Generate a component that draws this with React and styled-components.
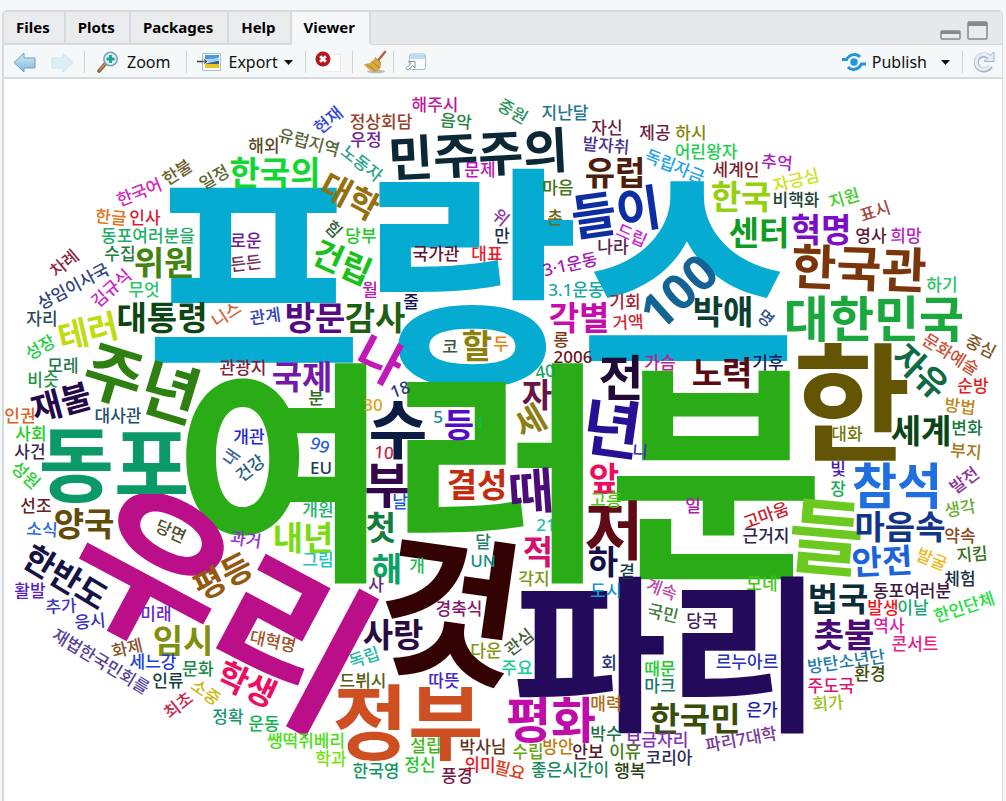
import React from "react";
import styled, { createGlobalStyle } from "styled-components";

const GlobalStyle = createGlobalStyle`
  * { box-sizing: border-box; }
  body {
    margin: 0;
    background: #f5f7f8;
    color: #000;
    font-family: "Noto Sans", "Noto Sans CJK KR", sans-serif;
  }
`;

const Page = styled.main`
  min-height: 100vh;
  padding: 10px 3px 0 2px;
  display: flex;
  overflow: hidden;
`;

const Pane = styled.section`
  flex: 1;
  min-width: 0;
  display: flex;
  flex-direction: column;
  border: 2px solid #d6dadc;
  border-right-width: 1px;
  border-bottom: 0;
  border-radius: 5px 5px 0 0;
  background: #fff;
`;

const TabBar = styled.header`
  display: flex;
  height: 33px;
  background: #e6e8ea;
`;

const TabList = styled.div`
  display: flex;
`;

const Tab = styled.button`
  border: 0;
  border-right: 2px solid #d6dadc;
  border-bottom: 2px solid ${(p) => (p["aria-selected"] ? "#f4f8f9" : "#d6dadc")};
  padding: 0 14px 0 12px;
  background: ${(p) => (p["aria-selected"] ? "#f4f8f9" : "#e9ebec")};
  font: 700 15px/31px "Noto Sans", sans-serif;
  color: #000;
`;

const TabFill = styled.div`
  flex: 1;
  display: flex;
  align-items: flex-end;
  justify-content: flex-end;
  gap: 6px;
  padding: 0 14px 4px 0;
  border-bottom: 1px solid #d6dadc;
`;

const Toolbar = styled.div`
  display: flex;
  align-items: center;
  height: 34px;
  padding: 2px 7px 0 9px;
  background: #f4f8f9;
  border-bottom: 2px solid #d6dadc;
`;

const ToolButton = styled.button`
  display: flex;
  align-items: center;
  gap: ${(p) => p.$gap || 4}px;
  border: 0;
  padding: 0;
  margin-right: ${(p) => p.$after || 0}px;
  background: none;
  color: #111;
  font: 400 16px/24px "Noto Sans", sans-serif;

  svg { display: block; flex: none; }
`;

const Divider = styled.span`
  width: 1px;
  height: 22px;
  margin-right: ${(p) => p.$after}px;
  background: #cfd4d6;
`;

const Spacer = styled.span`
  flex: 1;
`;

const Cloud = styled.div`
  position: relative;
  flex: none;
  height: 722px;
  overflow: hidden;
  background: #fff;
`;

const Word = styled.span`
  position: absolute;
  font-family: "Noto Sans", "Noto Sans CJK KR", sans-serif;
  font-weight: ${(p) => (p.$light ? 500 : 700)};
  line-height: 1;
  white-space: nowrap;
`;

// Coordinates of the middle of the cloud's top edge in the layout's own units.
const ORIGIN = { x: 503, y: 79 };

const XS = 17;
const S = 33;
const M = 49;
const L = 64;
const XL = 82;
const XXL = 168;
const HUGE = 236;

// text, centre x, centre y, size, rotation in degrees, colour
const words = [
  ["프랑스", 471, 276, HUGE, 0, "#06abd2"],
  ["여러분", 499, 471, HUGE, 0, "#2aac16"],
  ["파리", 667, 653, XXL, 0, "#230a5a"],
  ["우리", 223, 602, XXL, 28, "#bb0f8a"],
  ["것", 450, 607, 158, 8, "#330203"],
  ["한", 852, 402, 128, 0, "#635504"],
  ["동포", 114, 463, XL, 0, "#0b9a67"],
  ["정부", 408, 721, XL, 0, "#ce5022"],
  ["들", 826, 536, XL, 5, "#6bc91f"],
  ["주년", 142, 383, L, 17, "#2e8010"],
  ["수", 398, 429, L, 0, "#0c1b41"],
  ["년", 612, 428, L, 8, "#281094"],
  ["저", 614, 530, L, 0, "#5f0a15"],

  ["민주주의", 478, 154, M, -3, "#0c2836"],
  ["들이", 616, 212, M, -8, "#0c2da3"],
  ["한국관", 859, 268, M, 2, "#7b350b"],
  ["대한민국", 874, 318, M, 0, "#18a83c"],
  ["참석", 897, 485, M, 0, "#1f6fe0"],
  ["평화", 551, 719, M, 0, "#c00daa"],
  ["100", 678, 291, M, -42, "#156394"],
  ["나", 380, 359, M, 28, "#c218ba"],
  ["전", 621, 377, M, 0, "#210b36"],
  ["부", 387, 484, M, 0, "#33094a"],
  ["때", 531, 491, M, -4, "#4b0b78"],

  ["한국의", 275, 172, S, 0, "#12d631"],
  ["대학", 350, 196, S, 28, "#94700f"],
  ["건립", 342, 262, S, 24, "#18c21b"],
  ["위원", 164, 262, S, 0, "#418410"],
  ["대통령", 162, 317, S, 0, "#0c4713"],
  ["방문", 315, 317, S, 0, "#550a83"],
  ["감사", 375, 317, S, 0, "#1d6012"],
  ["테러", 88, 331, S, -13, "#c1dc0e"],
  ["국제", 302, 376, S, 0, "#7419a6"],
  ["재불", 61, 402, S, -15, "#240a49"],
  ["양국", 84, 523, S, 0, "#624b08"],
  ["한반도", 66, 577, S, 31, "#161246"],
  ["평등", 223, 576, S, -27, "#93590f"],
  ["임시", 183, 640, S, 0, "#7e900e"],
  ["학생", 247, 684, S, 25, "#ed0d62"],
  ["내년", 303, 537, S, 0, "#79db11"],
  ["첫", 381, 527, S, 0, "#117d3e"],
  ["해", 387, 568, S, 0, "#0aa262"],
  ["사랑", 393, 634, S, 0, "#280b40"],
  ["할", 477, 345, S, 0, "#8f7f0d"],
  ["등", 459, 424, S, 0, "#5709ca"],
  ["자", 537, 394, S, 0, "#681447"],
  ["세", 530, 421, S, -30, "#8e7e12"],
  ["결성", 477, 484, S, 0, "#c52b0d"],
  ["적", 538, 551, S, 0, "#d90f6d"],
  ["앞", 604, 478, S, 0, "#ed0d5c"],
  ["하", 603, 561, S, 0, "#150f49"],
  ["유럽", 615, 172, S, 0, "#4d1e0c"],
  ["한국", 741, 196, S, 0, "#94d00d"],
  ["센터", 759, 232, S, 0, "#0d9d1f"],
  ["혁명", 821, 229, S, 0, "#7c0dc7"],
  ["각별", 579, 317, S, 0, "#c80dad"],
  ["박애", 723, 311, S, 0, "#0c3f34"],
  ["노력", 722, 372, S, 0, "#570b15"],
  ["자유", 921, 371, S, 43, "#0e6b44"],
  ["세계", 921, 430, S, 0, "#0a4517"],
  ["마음속", 900, 526, S, 0, "#113687"],
  ["안전", 882, 561, S, -3, "#1b63da"],
  ["법국", 838, 598, S, 0, "#0b2e36"],
  ["촛불", 844, 634, S, 0, "#4a0a75"],
  ["한국민", 695, 718, S, 0, "#384d08"],

  ["해주시", 435, 104, XS, 0, "#c0189f"],
  ["음악", 456, 121, XS, 5, "#248745"],
  ["정상회담", 381, 121, XS, 0, "#994128"],
  ["우정", 366, 139, XS, 0, "#6b2395"],
  ["현재", 328, 120, XS, -40, "#3444d8"],
  ["해외", 264, 145, XS, 0, "#584a26"],
  ["유럽지역", 309, 142, XS, 15, "#57673b"],
  ["노동자", 362, 163, XS, 38, "#28a486"],
  ["한불", 177, 172, XS, -33, "#68602d"],
  ["일정", 214, 177, XS, -30, "#576630"],
  ["한국어", 139, 192, XS, -22, "#d328ba"],
  ["한글", 111, 217, XS, 5, "#dc7616"],
  ["인사", 145, 217, XS, 0, "#d41e3a"],
  ["동포여러분을", 148, 235, XS, 0, "#1fae69"],
  ["수집", 120, 253, XS, 0, "#247c44"],
  ["차례", 64, 263, XS, -40, "#8b2742"],
  ["상임이사국", 73, 286, XS, -28, "#324582"],
  ["김규식", 111, 288, XS, -42, "#d023c2"],
  ["무엇", 144, 289, XS, 0, "#1fca67"],
  ["자리", 42, 318, XS, 0, "#2b4b5a"],
  ["로운", 246, 240, XS, 0, "#6f1c99"],
  ["든든", 246, 263, XS, -7, "#76315d"],
  ["힘", 334, 229, XS, 45, "#356340"],
  ["당부", 361, 235, XS, 0, "#25ca28"],
  ["월", 370, 289, XS, 0, "#b818b0"],
  ["줄", 411, 301, XS, 0, "#101352"],
  ["관계", 265, 316, XS, -8, "#3143b4"],
  ["니스", 226, 314, XS, -33, "#d0663a"],
  ["문제", 480, 169, XS, 0, "#be18ba"],
  ["국가관", 436, 253, XS, 0, "#5c1834"],
  ["대표", 487, 253, XS, 0, "#f0182b"],
  ["위", 501, 217, XS, 40, "#903aa1"],
  ["만", 502, 235, XS, 0, "#232d4a"],
  ["중원", 513, 111, XS, 30, "#289258"],
  ["지난달", 565, 112, XS, 0, "#25758e"],
  ["자신", 607, 127, XS, 0, "#692342"],
  ["발자취", 606, 145, XS, 5, "#4a328f"],
  ["제공", 655, 132, XS, 0, "#711c45"],
  ["하시", 691, 132, XS, 0, "#84880d"],
  ["어린왕자", 706, 151, XS, 0, "#1ece51"],
  ["독립자금", 675, 166, XS, 22, "#23a2e4"],
  ["세계인", 736, 169, XS, 0, "#7b1f2e"],
  ["추억", 777, 162, XS, 5, "#a823bc"],
  ["자긍심", 796, 180, XS, -15, "#cbe319"],
  ["비핵화", 796, 199, XS, 0, "#194238"],
  ["지원", 844, 198, XS, -17, "#42cc25"],
  ["표시", 875, 211, XS, -18, "#a6483d"],
  ["영사", 871, 235, XS, 0, "#601835"],
  ["희망", 906, 235, XS, 0, "#ba22c7"],
  ["하기", 942, 284, XS, 0, "#1fc765"],
  ["마음", 558, 187, XS, 0, "#437516"],
  ["촌", 555, 217, XS, 0, "#736519"],
  ["드립", 632, 235, XS, 24, "#c72bd0"],
  ["나라", 613, 246, XS, 0, "#592553"],
  ["3·1운동", 570, 264, XS, -13, "#a319b3"],
  ["3.1운동", 576, 289, XS, 0, "#1ba6a2"],
  ["기회", 625, 301, XS, 0, "#a12332"],
  ["거액", 628, 322, XS, -3, "#cf2b3a"],
  ["명", 766, 318, XS, 38, "#30548d"],

  ["성장", 40, 347, XS, -30, "#1dce45"],
  ["모레", 63, 365, XS, 0, "#22774d"],
  ["비슷", 43, 379, XS, 0, "#209446"],
  ["인권", 20, 415, XS, 0, "#dc641e"],
  ["대사관", 118, 415, XS, 0, "#264d6d"],
  ["사회", 31, 433, XS, 0, "#19d319"],
  ["사건", 30, 451, XS, 0, "#352952"],
  ["성원", 26, 475, XS, 42, "#29ce32"],
  ["선조", 36, 505, XS, 0, "#63212a"],
  ["소식", 42, 529, XS, 3, "#2b69dd"],
  ["당면", 171, 531, XS, 24, "#53512d"],
  ["관광지", 243, 367, XS, 0, "#841d39"],
  ["분", 316, 397, XS, 0, "#2b6d20"],
  ["개관", 249, 436, XS, 0, "#1d27d6"],
  ["내", 231, 457, XS, -55, "#3b6a9a"],
  ["건강", 250, 468, XS, -38, "#265c80"],
  ["99", 320, 445, XS, 20, "#2760cf"],
  ["EU", 321, 467, XS, 0, "#193a5b"],
  ["개원", 318, 509, XS, 0, "#1bb56c"],
  ["과거", 246, 539, XS, 8, "#9332d0"],
  ["그림", 318, 559, XS, 0, "#19c5c3"],
  ["코", 450, 346, XS, 0, "#345a37"],
  ["두", 501, 343, XS, 0, "#e8820e"],
  ["30", 373, 404, XS, 0, "#dfa217"],
  ["18", 400, 389, XS, -20, "#253c73"],
  ["5", 438, 416, XS, 0, "#178c8c"],
  ["1", 480, 422, XS, 0, "#15b843"],
  ["10", 384, 452, XS, 5, "#cb2348"],
  ["날", 400, 501, XS, 0, "#1c59e8"],
  ["달", 483, 541, XS, 0, "#1c7e65"],
  ["UN", 483, 560, XS, 0, "#198c88"],
  ["개", 417, 565, XS, 0, "#1dba54"],
  ["사", 376, 584, XS, 0, "#6a257b"],
  ["롱", 561, 339, XS, 0, "#7e3714"],
  ["2006", 573, 356, XS, 0, "#6a141f"],
  ["40", 545, 371, XS, -8, "#13a65b"],
  ["가슴", 660, 362, XS, 0, "#c41a97"],
  ["기후", 768, 362, XS, 0, "#1b1857"],
  ["니", 640, 451, XS, 5, "#482cc0"],
  ["고흥", 606, 499, XS, 0, "#53c510"],
  ["21", 546, 524, XS, 0, "#17beaa"],
  ["일", 693, 505, XS, 0, "#b119b5"],
  ["고마움", 766, 515, XS, -20, "#c71f2e"],
  ["근거지", 766, 535, XS, 0, "#2a2348"],
  ["대화", 847, 433, XS, 0, "#75780c"],
  ["빛", 838, 468, XS, 0, "#4919bb"],
  ["장", 838, 488, XS, 0, "#15af57"],
  ["문화예술", 951, 354, XS, 32, "#c95239"],
  ["중심", 981, 346, XS, 27, "#7b5826"],
  ["순방", 973, 385, XS, 0, "#e21f22"],
  ["방법", 960, 406, XS, 7, "#b9891b"],
  ["변화", 967, 427, XS, 0, "#177942"],
  ["부지", 966, 451, XS, 5, "#a27819"],
  ["발전", 964, 480, XS, -37, "#8a319c"],
  ["생각", 960, 508, XS, -10, "#6bae34"],
  ["약속", 960, 535, XS, 0, "#8a481b"],
  ["지킴", 972, 554, XS, -5, "#367123"],
  ["발굴", 932, 559, XS, 22, "#efb81a"],
  ["체험", 960, 578, XS, 0, "#193047"],

  ["활발", 30, 590, XS, 0, "#5822c8"],
  ["추가", 61, 606, XS, -3, "#4235b8"],
  ["응시", 90, 621, XS, -5, "#382fb7"],
  ["미래", 156, 613, XS, 0, "#6b25d1"],
  ["재법한국민회를", 101, 661, XS, 31, "#594497"],
  ["화제", 127, 648, XS, -13, "#8a512c"],
  ["세느강", 153, 661, XS, 0, "#193dd9"],
  ["문화", 198, 668, XS, 0, "#198b48"],
  ["인류", 168, 680, XS, 0, "#153d3b"],
  ["소중", 206, 692, XS, 35, "#ccb719"],
  ["최초", 178, 705, XS, -38, "#c8254d"],
  ["정확", 228, 716, XS, 0, "#179574"],
  ["운동", 264, 723, XS, 0, "#16b252"],
  ["쌩떡쥐베리", 306, 740, XS, 0, "#48df12"],
  ["학과", 331, 758, XS, 0, "#77e20f"],
  ["대혁명", 273, 641, XS, 12, "#9f532d"],
  ["독립", 364, 657, XS, -18, "#27b8a5"],
  ["드뷔시", 363, 680, XS, 0, "#556016"],
  ["따뜻", 444, 680, XS, 0, "#4528c8"],
  ["경축식", 459, 608, XS, 0, "#85166b"],
  ["다운", 486, 650, XS, 0, "#85970e"],
  ["관심", 519, 642, XS, -38, "#466338"],
  ["설립", 426, 745, XS, 0, "#48b518"],
  ["박사님", 483, 746, XS, 0, "#65321d"],
  ["한국영", 376, 770, XS, 0, "#129760"],
  ["정신", 420, 764, XS, 0, "#1cc925"],
  ["의미", 480, 764, XS, 0, "#eb1820"],
  ["풍경", 457, 775, XS, 0, "#741b46"],
  ["필요", 510, 770, XS, 15, "#dc3e22"],

  ["각지", 534, 578, XS, 0, "#7c9719"],
  ["곁", 627, 571, XS, 0, "#163a47"],
  ["도시", 606, 590, XS, 0, "#1796ce"],
  ["계속", 662, 589, XS, 20, "#c248a4"],
  ["국민", 663, 613, XS, 13, "#427c37"],
  ["당국", 702, 620, XS, 0, "#441d60"],
  ["모네", 762, 583, XS, 0, "#44c513"],
  ["주요", 517, 667, XS, 0, "#14cf91"],
  ["회", 609, 662, XS, 0, "#1d3277"],
  ["때문", 660, 668, XS, 0, "#1acb29"],
  ["마크", 660, 685, XS, 0, "#167a6f"],
  ["르누아르", 747, 661, XS, 0, "#292fc0"],
  ["매력", 606, 703, XS, 0, "#ad6b15"],
  ["은가", 762, 709, XS, 0, "#1b1eb9"],
  ["박수", 606, 733, XS, 0, "#177444"],
  ["보금자리", 657, 739, XS, 0, "#8330bb"],
  ["파리7대학", 741, 739, XS, -10, "#7b3699"],
  ["수립", 528, 751, XS, 0, "#66a611"],
  ["방안", 558, 746, XS, 0, "#bf7a12"],
  ["안보", 588, 751, XS, 0, "#581628"],
  ["이유", 625, 751, XS, 0, "#437d17"],
  ["코리아", 669, 757, XS, 0, "#292f5d"],
  ["좋은시간이", 570, 769, XS, 0, "#16885b"],
  ["행복", 630, 770, XS, 0, "#283e0f"],
  ["동포여러분", 912, 590, XS, 0, "#431540"],
  ["발생", 883, 607, XS, 0, "#ee1721"],
  ["이날", 913, 607, XS, 0, "#13a572"],
  ["역사", 889, 625, XS, 0, "#d91eaa"],
  ["콘서트", 915, 643, XS, 0, "#e71e87"],
  ["한인단체", 964, 607, XS, -18, "#20df3b"],
  ["방탄소년단", 846, 661, XS, -8, "#237ba9"],
  ["환경", 870, 673, XS, 0, "#404d09"],
  ["주도국", 831, 685, XS, 0, "#d9176c"],
  ["회가", 828, 703, XS, -5, "#99c419"],
];

const BackIcon = () => (
  <svg width="23" height="21" viewBox="0 0 23 21">
    <defs>
      <linearGradient id="arrow" x1="0" y1="0" x2="0" y2="1">
        <stop offset="0" stopColor="#d4ecf9" />
        <stop offset="1" stopColor="#7fb8dc" />
      </linearGradient>
    </defs>
    <path d="M1 10.500 11 1v5h11v10H11v4z" fill="url(#arrow)" stroke="#6fa0bf" strokeLinejoin="round" />
  </svg>
);

const ForwardIcon = () => (
  <svg width="23" height="21" viewBox="0 0 23 21" opacity=".35">
    <path d="M22 10.500 12 1v5H1v10h11v4z" fill="#b4dcf2" stroke="#8dbdd8" strokeLinejoin="round" />
  </svg>
);

const ZoomIcon = () => (
  <svg width="22" height="22" viewBox="0 0 22 22">
    <path d="M2 20 9.500 11.500" stroke="#8a5a3c" strokeWidth="3.600" strokeLinecap="round" />
    <path d="M2.500 19 8.500 12.500" stroke="#c99a74" strokeWidth="1.200" strokeLinecap="round" />
    <circle cx="13.500" cy="8" r="6.700" fill="#d8eff5" stroke="#7f9fb4" strokeWidth="1.600" />
    <path d="M13.500 4v8M9.500 8h8" stroke="#17a58a" strokeWidth="2.800" />
  </svg>
);

const ExportIcon = () => (
  <svg width="25" height="20" viewBox="0 0 25 20">
    <path d="M5.500 1.500h18v17h-18z" fill="#fff" stroke="#a8bdc9" />
    <path d="M8 3h14v7H8z" fill="#4a98e0" />
    <path d="M8 8c4-3 7 1 14-3v6H8z" fill="#a5d3f5" />
    <path d="M8 11c5 1 9-2 14-2v3H8z" fill="#38608a" />
    <path d="M8 12h14v4H8z" fill="#e9c522" />
    <path d="M0 9.500h8" stroke="#444" strokeWidth="1.600" />
    <path d="M7 6v7l4-3.500z" fill="#444" stroke="#fff" strokeWidth=".8" />
  </svg>
);

const RemoveIcon = () => (
  <svg width="27" height="22" viewBox="0 0 27 22">
    <path d="M8.500 3.500h17v17h-17z" fill="#fff" stroke="#e8ecee" />
    <circle cx="8" cy="8" r="7.500" fill="#b5161d" />
    <path d="M5.200 5.200l5.600 5.600M10.800 5.200l-5.600 5.600" stroke="#fff" strokeWidth="2.800" />
  </svg>
);

const BroomIcon = () => (
  <svg width="24" height="24" viewBox="0 0 24 24">
    <ellipse cx="13" cy="21.500" rx="9" ry="1.800" fill="#b9bdbd" />
    <path d="M22 2 15 10.500" stroke="#b7614d" strokeWidth="2.600" strokeLinecap="round" />
    <path d="M12 7.500 18 13c1 4-2 8-5 9.500C8 21 3 18 1 14c5 0 9-2 11-6.500z" fill="#d9a944" />
    <path d="M12 7.500 18 13M8.500 11l8 7M4 15c3 1 6 4 8 6" stroke="#a87c30" fill="none" />
  </svg>
);

const WindowIcon = () => (
  <svg width="23" height="18" viewBox="0 0 23 18">
    <rect x="5.500" y="1" width="16" height="15.500" rx="2" fill="#f8fcfe" stroke="#9ebfd5" />
    <path d="M6 2h15v4H6z" fill="#bfdcf0" />
    <path d="M2 15.500 7 10.500 4.500 8.500H11V15L8.700 12.600 4 17z" fill="#fff" stroke="#83929c" strokeLinejoin="round" />
  </svg>
);

const PublishIcon = () => (
  <svg width="24" height="18" viewBox="0 0 24 18">
    <circle cx="12" cy="9" r="3.700" fill="#2196dc" />
    <path d="M0 6.500h4.500C8 .5 15 .3 18 4M24 11h-4.500C16 17.500 9 17.700 6 14" fill="none" stroke="#2196dc" strokeWidth="3" />
  </svg>
);

const RefreshIcon = () => (
  <svg width="22" height="23" viewBox="0 0 22 23">
    <path d="M17.500 15A7.500 7.500 0 1 1 16.500 6.500" fill="none" stroke="#a5b3c8" strokeWidth="5" />
    <path d="M21 1v9.500h-10z" fill="#e6ecf6" stroke="#a5b3c8" strokeLinejoin="round" />
    <path d="M17 14.800A7.500 7.500 0 1 1 17 7" fill="none" stroke="#e6ecf6" strokeWidth="3" />
  </svg>
);

const Caret = () => (
  <svg width="9" height="5" viewBox="0 0 9 5">
    <path d="M0 0h9L4.500 5z" fill="#111" />
  </svg>
);

const MinimizeIcon = () => (
  <svg width="21" height="10" viewBox="0 0 21 10">
    <rect x="1" y="1" width="19" height="8" rx="1" fill="#e9ebec" stroke="#84898b" strokeWidth="1.500" />
    <path d="M1 1h19v3H1z" fill="#84898b" />
  </svg>
);

const MaximizeIcon = () => (
  <svg width="21" height="19" viewBox="0 0 21 19">
    <rect x="1" y="1" width="19" height="17" rx="1" fill="#e9ebec" stroke="#84898b" strokeWidth="1.500" />
    <path d="M1 1h19v4H1z" fill="#84898b" />
  </svg>
);

const tabs = ["Files", "Plots", "Packages", "Help", "Viewer"];

export default function App() {
  return (
    <>
      <GlobalStyle />
      <Page>
        <Pane>
          <TabBar>
            <TabList role="tablist">
              {tabs.map((name) => (
                <Tab key={name} role="tab" aria-selected={name === "Viewer"}>
                  {name}
                </Tab>
              ))}
            </TabList>
            <TabFill>
              <ToolButton aria-label="Minimize"><MinimizeIcon /></ToolButton>
              <ToolButton aria-label="Maximize"><MaximizeIcon /></ToolButton>
            </TabFill>
          </TabBar>
          <Toolbar>
            <ToolButton aria-label="Back" $after={15}><BackIcon /></ToolButton>
            <ToolButton aria-label="Forward" $after={10}><ForwardIcon /></ToolButton>
            <Divider $after={12} />
            <ToolButton $gap={8} $after={16}><ZoomIcon />Zoom</ToolButton>
            <Divider $after={10} />
            <ToolButton $gap={6} $after={12}><ExportIcon />Export<Caret /></ToolButton>
            <Divider $after={9} />
            <ToolButton aria-label="Remove current item" $after={10}><RemoveIcon /></ToolButton>
            <Divider $after={10} />
            <ToolButton aria-label="Clear all items" $after={6}><BroomIcon /></ToolButton>
            <Divider $after={10} />
            <ToolButton aria-label="Show in new window"><WindowIcon /></ToolButton>
            <Spacer />
            <ToolButton $gap={6} $after={14}><PublishIcon />Publish</ToolButton>
            <ToolButton aria-label="Publish options" $after={12}><Caret /></ToolButton>
            <Divider $after={10} />
            <ToolButton aria-label="Refresh"><RefreshIcon /></ToolButton>
          </Toolbar>
          <Cloud>
            {words.map(([text, x, y, size, angle, color]) => (
              <Word
                key={text}
                $light={size === XS}
                style={{
                  left: `calc(50% + ${x - ORIGIN.x}px)`,
                  top: y - ORIGIN.y,
                  fontSize: size,
                  color,
                  transform: `translate(-50%, -50%) rotate(${angle}deg)`,
                }}
              >
                {text}
              </Word>
            ))}
          </Cloud>
        </Pane>
      </Page>
    </>
  );
}
